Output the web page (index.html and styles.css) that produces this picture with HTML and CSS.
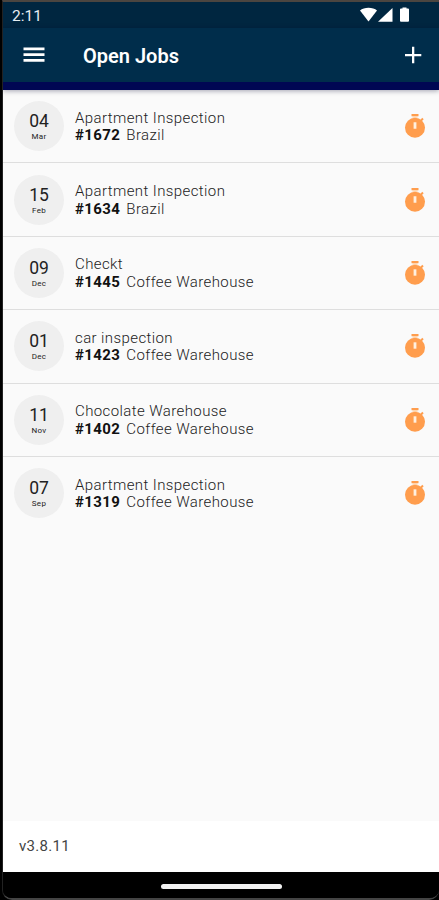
FILE: index.html
```
<!DOCTYPE html>
<html lang="en">
<head>
    <meta charset="UTF-8">
    <meta name="viewport" content="width=device-width, initial-scale=1.0">
    <title>Open Jobs</title>
    <link rel="stylesheet" href="styles.css">
</head>
<body>
    <svg class="symbols" aria-hidden="true">
        <symbol id="timer" viewBox="0 0 22 26">
            <path fill="#ff9d4d" d="M7.500 1h7v2.200h-7z"/>
            <path fill="#ffd0a6" d="M8.500 3.200h5v1.600h-5z"/>
            <path stroke="#ff9d4d" stroke-width="2" d="M16 8.500l3-3"/>
            <circle cx="11" cy="14.800" r="10" fill="#ff9d4d"/>
            <path fill="#fff0df" d="M9.600 9.300h2.800v6.400H9.600z"/>
        </symbol>
    </svg>
    <div class="phone">
        <div class="status-bar">
            <span>2:11</span>
            <svg class="status-icons" width="52" height="16" viewBox="0 0 52 16" fill="#fff">
                <path d="M0 3.500C4-.2 13-.2 17 3.500L8.500 14.500z"/>
                <path d="M32.500 1v13.700H18z"/>
                <path d="M41 1.500h1.500V.5h4v1H48q1 0 1 1v11.200q0 1-1 1h-7q-1 0-1-1V2.500q0-1 1-1z"/>
            </svg>
        </div>
        <header class="app-bar">
            <svg width="22" height="16" viewBox="0 0 22 16" fill="#fff">
                <path d="M.5.500h21v2.700H.5zM.5 6.300h21V9H.5zM.5 12h21v2.700H.5z"/>
            </svg>
            <h1>Open Jobs</h1>
            <svg width="18" height="18" viewBox="0 0 18 18" fill="#fff">
                <path d="M8 .8h2.300v7.100h7v2.300h-7v7.100H8v-7.100H1V7.900h7z"/>
            </svg>
        </header>
        <ul class="jobs">
            <li>
                <div class="date"><span class="day">04</span><span class="month">Mar</span></div>
                <div class="info"><p>Apartment Inspection</p><p><b>#1672</b>Brazil</p></div>
                <svg class="timer"><use href="#timer"/></svg>
            </li>
            <li>
                <div class="date"><span class="day">15</span><span class="month">Feb</span></div>
                <div class="info"><p>Apartment Inspection</p><p><b>#1634</b>Brazil</p></div>
                <svg class="timer"><use href="#timer"/></svg>
            </li>
            <li>
                <div class="date"><span class="day">09</span><span class="month">Dec</span></div>
                <div class="info"><p>Checkt</p><p><b>#1445</b>Coffee Warehouse</p></div>
                <svg class="timer"><use href="#timer"/></svg>
            </li>
            <li>
                <div class="date"><span class="day">01</span><span class="month">Dec</span></div>
                <div class="info"><p>car inspection</p><p><b>#1423</b>Coffee Warehouse</p></div>
                <svg class="timer"><use href="#timer"/></svg>
            </li>
            <li>
                <div class="date"><span class="day">11</span><span class="month">Nov</span></div>
                <div class="info"><p>Chocolate Warehouse</p><p><b>#1402</b>Coffee Warehouse</p></div>
                <svg class="timer"><use href="#timer"/></svg>
            </li>
            <li>
                <div class="date"><span class="day">07</span><span class="month">Sep</span></div>
                <div class="info"><p>Apartment Inspection</p><p><b>#1319</b>Coffee Warehouse</p></div>
                <svg class="timer"><use href="#timer"/></svg>
            </li>
        </ul>
        <footer class="version">v3.8.11</footer>
        <div class="nav-bar"><span></span></div>
    </div>
</body>
</html>
```
FILE: styles.css
```
* {
    box-sizing: border-box;
}
body {
    margin: 0;
    background-color: #000;
    font-family: Roboto, sans-serif;
}
.symbols {
    display: none;
}
.phone {
    display: flex;
    flex-direction: column;
    height: 900px;
    margin-left: 2px;
    border-top: 2px solid #4b4540;
    border-bottom: 2px solid #444;
    border-left: 1px solid #222;
    border-radius: 0 0 10px 10px;
    overflow: hidden;
}
.status-bar {
    display: flex;
    justify-content: space-between;
    height: 26px;
    padding: 5px 27px 0 9px;
    background-color: #002640;
    color: #e6edf2;
    font-size: 15.5px;
    line-height: 18px;
}
.app-bar {
    display: flex;
    align-items: center;
    flex-shrink: 0;
    height: 62px;
    padding: 0 17px 0 20px;
    background-color: #002d4b;
    border-bottom: 8px solid #000753;
    box-shadow: 0 1px 5px rgba(0, 0, 40, 0.35);
    z-index: 1;
}
.app-bar h1 {
    flex: 1;
    margin: 1px 0 0 38px;
    color: #fff;
    font-size: 20px;
    font-weight: 600;
}
.jobs {
    flex: 1;
    margin: 0;
    padding: 0;
    background-color: #fafafa;
    list-style: none;
}
.jobs li {
    display: flex;
    align-items: center;
    height: 73.4px;
    padding: 0 13px 0 11px;
    border-bottom: 1px solid #dedede;
}
.jobs li:last-child {
    border-bottom-color: transparent;
}
.date {
    display: flex;
    flex-direction: column;
    align-items: center;
    width: 50px;
    height: 50px;
    padding-top: 10px;
    border-radius: 50%;
    background-color: #efefef;
    color: #222;
}
.day {
    font-size: 17.5px;
    line-height: 20px;
}
.month {
    font-size: 8px;
    line-height: 12px;
    letter-spacing: 0.3px;
}
.info {
    flex: 1;
    margin-left: 11px;
    padding-top: 2px;
    color: #222;
    font-size: 15px;
    font-weight: 300;
    line-height: 17.6px;
    letter-spacing: 0.4px;
}
.info p {
    margin: 0;
}
.info b {
    margin-right: 6px;
    color: #111;
    font-weight: 700;
}
.timer {
    width: 22px;
    height: 26px;
}
.version {
    height: 51px;
    padding-left: 16px;
    background-color: #fff;
    color: #444;
    font-size: 15px;
    line-height: 51px;
    letter-spacing: 0.3px;
}
.nav-bar {
    display: flex;
    justify-content: center;
    height: 26px;
    padding-top: 12px;
    background-color: #000;
}
.nav-bar span {
    width: 121px;
    height: 5px;
    border-radius: 3px;
    background-color: #f2f2f2;
}
```
